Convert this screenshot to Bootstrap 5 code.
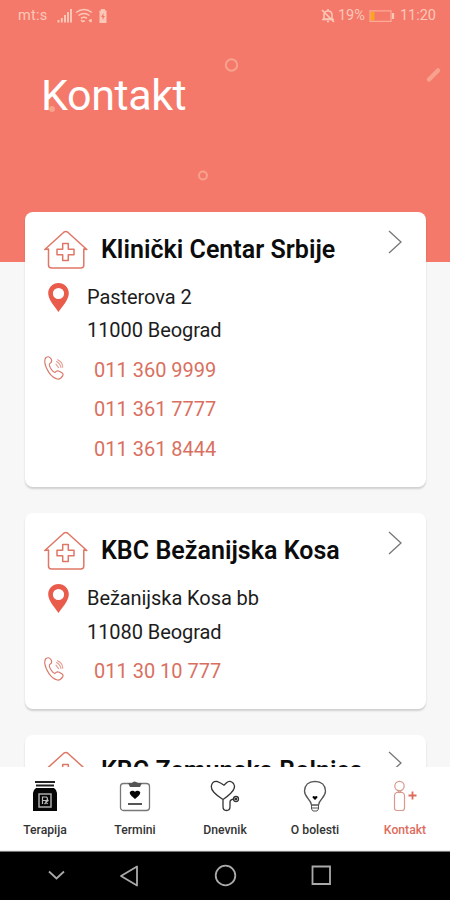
<!DOCTYPE html>
<html lang="sr">
<head>
<meta charset="utf-8">
<meta name="viewport" content="width=device-width, initial-scale=1">
<title>Kontakt</title>
<link rel="stylesheet" href="https://cdn.jsdelivr.net/npm/bootstrap@5.3.0/dist/css/bootstrap.min.css">
<style>
body{font-family:Roboto,"Liberation Sans",sans-serif;color:#111}
svg{display:block;flex:none;fill:none;overflow:visible}
.screen{width:450px;height:900px;background:linear-gradient(#f4796b 262px,#f7f7f7 262px)}
.status{height:32px;padding:0 14px 0 18px;color:#fbc8b8;font-size:14.5px;line-height:32px}
.mts{letter-spacing:.25px;margin-right:10px}
.hero{height:179.5px;padding:36px 0 0 41px}
.hero h1{font-size:43px;line-height:54px;font-weight:400;color:#fff;letter-spacing:-.4px}
.deco{left:0;top:0}
.places{padding:0 24px 0 25px;gap:26px;min-height:0;flex-basis:0}
.place{border-radius:8px;border:0;padding:16.5px 20px 17.5px 19px;box-shadow:0 2px 2px rgba(0,0,0,.16);flex:none}
.place:last-child{padding-top:14px}
.place-head{height:42px}
.place h2{font-size:25px;line-height:43px;font-weight:600;margin:0 0 0 13px;color:#0c0c0c;white-space:nowrap;letter-spacing:.03px}
.house{margin-top:2px}
.chev{margin:2px 4px 0 auto}
.address{margin-top:11px;font-size:20px;line-height:33.3px;color:#1c1c1c;letter-spacing:-.07px}
.address svg{margin:2px 18px 0 4px}
.phones{margin-top:3px;font-size:20px;line-height:39.6px}
.phones a{color:#d9705f;display:block}
.phones svg{margin:5px 30px 0 0}
.tabs{height:84px;border-bottom:1px solid #ededed;font-size:12.2px;font-weight:500;color:#333}
.tabs a{color:inherit;width:90px;padding-top:13px;line-height:16px;white-space:nowrap}
.tabs svg{margin-bottom:10px}
.tabs a.current{color:#dd6c5c}
.sysbar{height:49px;background:#000;border-top:1px solid #777}
</style>
</head>
<body class="m-0">
<svg width="0" height="0" class="position-absolute" aria-hidden="true">
<symbol id="house" viewBox="0 0 44 39"><g stroke="#df7766" stroke-width="1.5" stroke-linejoin="round" stroke-linecap="round"><path d="M.8 19.500 19.800 2.200q2-1.600 4 0l19 17.300-3-.5v16q0 3-3 3H7.500q-3 0-3-3V19z"/><path d="M18.700 13.500h5.600v5.700H30v5.600h-5.700v5.700h-5.600v-5.700H13v-5.600h5.700z"/></g></symbol>
<symbol id="pin" viewBox="0 0 21 29"><path fill="#e95b4b" fill-rule="evenodd" d="M10.500 0C4.700 0 .2 4.500.2 10.200.2 17 7 23.500 10.500 29 14 23.500 20.800 17 20.800 10.200 20.800 4.500 16.300 0 10.500 0zm0 4.900a5.600 5.600 0 1 1 0 11.200 5.600 5.600 0 0 1 0-11.200z"/></symbol>
<symbol id="phone" viewBox="0 0 20 24"><g stroke="#d9796b" stroke-width="1.150" stroke-linecap="round" stroke-linejoin="round"><path d="M2 1.500Q5.500-.5 7.300 3.200 8.500 6.300 5.700 7.600 4.700 8.700 6.500 12q2.500 4.200 4.500 4.500 1.700-2.500 4.200-1.300l3 1.800q1.500 1.200.4 2.900-2 3.600-5.300 3.100Q8.500 21.800 5 16.600 1.300 11 .8 6.500.5 3 2 1.500z"/><path d="m12 8.200 2.500 3.400M12.500 5.500q3.500 1.600 4.500 6M13.500 3.800q5 2 5.300 7.400" opacity=".7"/></g></symbol>
<symbol id="chevron" viewBox="0 0 14 24"><path d="m1 1 12 11L1 23" stroke="#777" stroke-width="1.3"/></symbol>
</svg>
<div class="screen d-flex flex-column overflow-hidden position-relative">
  <svg class="deco position-absolute" width="450" height="200" aria-hidden="true"><g stroke="#f8a18d" stroke-width="2"><circle cx="231.500" cy="65" r="5.700"/><circle cx="203" cy="175.500" r="4"/><path d="m429 79.500 9-9" stroke-width="4.500" stroke-linecap="round"/></g><circle cx="52" cy="109" r="3" fill="#f8a18d"/></svg>
  <div class="status d-flex align-items-center flex-shrink-0">
    <span class="mts">mt:s</span>
    <svg width="52" height="16" viewBox="58 8 52 16"><g stroke="#fbc8b8"><path stroke-width="1.900" d="M59.500 20v2.500M62.800 18v4.500M66 15v7.500M69 12v10.500M72 9v13.500"/><path stroke-width="1.500" d="M77 12.500q8-6 16 0M79.500 15.500q5.500-4 11 0M82 18.300q3-2.200 6 0M85 20v2M84 22l-2-2m10 2-2-2M92 19v3"/></g><path fill="#fbc8b8" fill-rule="evenodd" d="M102 9h4v1.500h1.500V23H100.500V10.500h1.500zm2.500 4-2.500 4h1.500v3l2.500-4h-1.500z"/></svg>
    <div class="d-flex align-items-center ms-auto">
      <svg width="14" height="14" viewBox="0 0 14 14"><path d="M3 10V6q0-4 4-4t4 4v4zM1 10.500h12M6 12.500h2M7 0v2M1 1l12 12" stroke="#fbc8b8" stroke-width="1.600"/></svg>
      <span style="margin-left:3px">19%</span>
      <svg class="ms-1" width="26" height="13" viewBox="0 0 26 13"><path fill="#fba51b" d="M1.500 1.500h4v9h-4z"/><path d="M1 .8h21v10.500H1z" stroke="#fbab96" stroke-width="1.200"/><path d="M24 3v6" stroke="#fbc8b8" stroke-width="2.200"/></svg>
      <span style="margin-left:5px">11:20</span>
    </div>
  </div>
  <header class="hero flex-shrink-0"><h1 class="m-0">Kontakt</h1></header>
  <main class="places d-flex flex-column flex-grow-1 overflow-hidden">
    <section class="card place">
      <div class="place-head d-flex"><svg width="44" height="39" class="house"><use href="#house"/></svg><h2>Klinički Centar Srbije</h2><svg class="chev" width="14" height="24"><use href="#chevron"/></svg></div>
      <div class="address d-flex"><svg width="21" height="29"><use href="#pin"/></svg><div>Pasterova 2<br>11000 Beograd</div></div>
      <div class="phones d-flex"><svg width="20" height="24"><use href="#phone"/></svg><div><a class="text-decoration-none" href="#">011 360 9999</a><a class="text-decoration-none" href="#">011 361 7777</a><a class="text-decoration-none" href="#">011 361 8444</a></div></div>
    </section>
    <section class="card place">
      <div class="place-head d-flex"><svg width="44" height="39" class="house"><use href="#house"/></svg><h2>KBC Bežanijska Kosa</h2><svg class="chev" width="14" height="24"><use href="#chevron"/></svg></div>
      <div class="address d-flex"><svg width="21" height="29"><use href="#pin"/></svg><div>Bežanijska Kosa bb<br>11080 Beograd</div></div>
      <div class="phones d-flex"><svg width="20" height="24"><use href="#phone"/></svg><div><a class="text-decoration-none" href="#">011 30 10 777</a></div></div>
    </section>
    <section class="card place">
      <div class="place-head d-flex"><svg width="44" height="39" class="house"><use href="#house"/></svg><h2>KBC Zemunska Bolnica</h2><svg class="chev" width="14" height="24"><use href="#chevron"/></svg></div>
    </section>
  </main>
  <nav class="tabs d-flex bg-white flex-shrink-0">
    <a href="#" class="text-decoration-none d-flex flex-column align-items-center"><svg width="32" height="32" viewBox="0 0 32 32"><path d="M6 2h20M7 5.500h18" stroke="#222" stroke-width="2"/><path d="M7 8h18q3 2 3 5v18H4V13q0-3 3-5z" fill="#050505"/><path d="M10 14h12v13H10z" stroke="#aaa" stroke-width="1.500"/><path d="M13.500 24v-7h4q2 2 0 3.500h-4m3 0 2 3.500m-3 0 4-4" stroke="#bbb" stroke-width="1.200"/></svg>Terapija</a>
    <a href="#" class="text-decoration-none d-flex flex-column align-items-center"><svg width="32" height="32" viewBox="0 0 32 32"><rect x="1.500" y="3.500" width="29" height="27" rx="3" stroke="#777" stroke-width="1.300"/><path d="M9 3h4q2-3 6 0h4l-2 4H11z" fill="#555"/><path d="M16 19q-8-6-4-8 3-1 4 1 1-2 4-1 4 2-4 8z" fill="#050505"/><path d="M9 24h14" stroke="#555" stroke-width="2"/></svg>Termini</a>
    <a href="#" class="text-decoration-none d-flex flex-column align-items-center"><svg width="32" height="32" viewBox="0 0 32 32"><g stroke="#333" stroke-width="1.300" stroke-linecap="round"><path d="M14 19.500Q2 12 2.300 6.500 3 1 8 1.500l4 1.700 3 2 2.500-2.500Q21-.5 24.500 3.500q3 4.500-3 10-3 3-7.500 6zM14 19.500v7q0 4 3.500 4t3.500-4V22q0-2.500 4-3"/><circle cx="27" cy="19" r="2.500"/><circle cx="27" cy="19" r=".7"/></g></svg>Dnevnik</a>
    <a href="#" class="text-decoration-none d-flex flex-column align-items-center"><svg width="32" height="32" viewBox="0 0 32 32"><path d="M12.500 25q-.5-3-3.500-6.500-3.500-4-3.500-7.500Q6 1.500 16 1.300 26 1.500 26.500 11q0 3.500-3.500 7.500-3 3.500-3.500 6.500z" stroke="#555" stroke-width="1.300"/><path d="M12.500 25v4l1.500 2h4l1.500-2v-4M12.500 28h7" stroke="#555"/><path d="m16 20-2.500-2.500q0-2.500 2.500-1 2.500-1.500 2.500 1z" fill="#000"/></svg>O bolesti</a>
    <a href="#" class="current text-decoration-none d-flex flex-column align-items-center"><svg width="32" height="32" viewBox="0 0 32 32"><g stroke="#d99a8e" stroke-width="1.200"><circle cx="10.500" cy="6" r="4.700"/><path d="M7.500 12.500h6q2 1 2 3V28q0 2.500-2.500 2.500H8q-2.500 0-2.500-2.500V15.500q0-2 2-3zM8 10l2.500 2.500L13 10"/></g><path d="M19.500 15.500h8M23.500 11.500v8" stroke="#dd6c5c" stroke-width="1.800"/></svg>Kontakt</a>
  </nav>
  <div class="sysbar flex-shrink-0"><svg width="450" height="48" viewBox="0 852 450 48" stroke="#aaa" stroke-width="1.800"><path d="m49 871.500 7.500 7L64 871.500"/><path d="M137 866.500v19l-16-9.500z" stroke-linejoin="round"/><circle cx="225.500" cy="875.500" r="9.800"/><path d="M312.500 866.500h17.500v17.500h-17.500z"/></svg></div>
</div>
<script src="https://cdn.jsdelivr.net/npm/bootstrap@5.3.0/dist/js/bootstrap.bundle.min.js"></script>
</body>
</html>
